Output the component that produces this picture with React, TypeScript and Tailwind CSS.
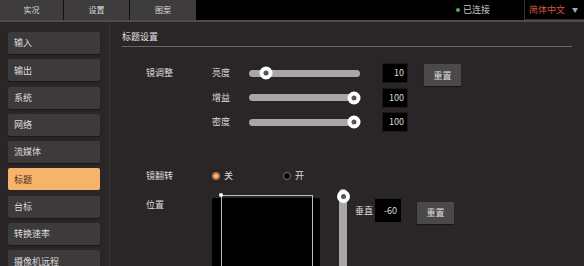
import { useState } from "react"

const font = { fontFamily: '"Noto Sans CJK SC", "Noto Sans", sans-serif' }

const menu = ["输入", "输出", "系统", "网络", "流媒体", "标题", "台标", "转换速率", "摄像机远程"]

function Slider({ pos }: { pos: number }) {
    return (
        <div className="relative w-[111px] h-[7px] rounded-full bg-[#a9a6a8]">
            <div
                className="absolute top-1/2 -translate-y-1/2 -translate-x-1/2 w-[13px] h-[13px] rounded-full bg-white flex items-center justify-center"
                style={{ left: `${pos}%` }}
            >
                <div className="w-[5px] h-[5px] rounded-full bg-[#555]" />
            </div>
        </div>
    )
}

function NumBox({ value }: { value: string }) {
    return (
        <div className="w-[26px] h-[20px] bg-black border border-[#1a1a1a] text-[9px] text-[#ddd] flex items-center justify-end pr-[3px]">
            {value}
        </div>
    )
}

function ResetButton() {
    return (
        <button className="w-[37px] h-[22px] bg-[#4a4849] text-[9px] text-[#ddd] rounded-[1px] shadow-[0_1px_1px_rgba(0,0,0,0.5)]">
            重置
        </button>
    )
}

export default function App() {
    const [active] = useState("标题")
    const adjust = [
        { label: "亮度", pos: 15, value: "10" },
        { label: "增益", pos: 95, value: "100" },
        { label: "密度", pos: 95, value: "100" },
    ]

    return (
        <div className="w-[584px] h-[266px] overflow-hidden bg-[#2a2628] flex flex-col" style={font}>
            {/* top bar */}
            <div className="h-[20px] bg-black flex items-stretch shrink-0">
                <div className="w-[64px] bg-[#3e3c3d] border-r border-[#111] text-[8px] text-[#ddd] flex items-center justify-center">实况</div>
                <div className="w-[66px] bg-[#3e3c3d] border-r border-[#111] text-[8px] text-[#ddd] flex items-center justify-center">设置</div>
                <div className="w-[66px] bg-[#3e3c3d] text-[8px] text-[#ddd] flex items-center justify-center">图案</div>
                <div className="flex-1" />
                <div className="flex items-center gap-[3px] mr-[34px] text-[9px] text-[#ccc]">
                    <div className="w-[4px] h-[4px] rounded-full bg-[#4caf50]" />
                    已连接
                </div>
                <div className="w-[60px] border-l border-b border-[#3a3030] flex items-center justify-between pl-[4px] pr-[6px]">
                    <span className="text-[9px] text-[#d2553d]">简体中文</span>
                    <span className="text-[6px] text-[#aaa]">▼</span>
                </div>
            </div>
            <div className="h-[2px] bg-[#4d4b4c] shrink-0" />

            <div className="flex flex-1 min-h-0">
                {/* sidebar */}
                <div className="w-[110px] shrink-0 border-r border-[#3a3638] pt-[10px] pl-[8px] flex flex-col gap-[5.3px]">
                    {menu.map(item => (
                        <div
                            key={item}
                            className={`w-[92px] h-[22px] shrink-0 rounded-[2px] flex items-center pl-[6px] text-[9px] ${
                                item === active
                                    ? "bg-[#f6b36c] text-[#4a2e16]"
                                    : "bg-[#3d3a3c] text-[#ddd] shadow-[0_1px_1px_rgba(0,0,0,0.4)]"
                            }`}
                        >
                            {item}
                        </div>
                    ))}
                </div>

                {/* content */}
                <div className="flex-1 flex flex-col pl-[12px] pr-[12px]">
                    <div className="pt-[9px] pb-[3px] border-b border-[#666] text-[9px] text-[#e5e5e5] leading-[12px]">
                        标题设置
                    </div>

                    <div className="flex pl-[24px] mt-[16px]">
                        <div className="w-[66px] text-[9px] text-[#ddd] h-[20px] flex items-center">镜调整</div>
                        <div className="flex flex-col gap-[4.5px]">
                            {adjust.map((a, i) => (
                                <div key={a.label} className="flex items-center h-[20px]">
                                    <div className="w-[37px] text-[9px] text-[#ddd]">{a.label}</div>
                                    <Slider pos={a.pos} />
                                    <div className="ml-[22px]">
                                        <NumBox value={a.value} />
                                    </div>
                                    {i === 0 && (
                                        <div className="ml-[16px]">
                                            <ResetButton />
                                        </div>
                                    )}
                                </div>
                            ))}
                        </div>
                    </div>

                    <div className="flex items-center pl-[24px] mt-[38px] h-[12px]">
                        <div className="w-[66px] text-[9px] text-[#ddd]">镜翻转</div>
                        <div className="flex items-center gap-[4px] w-[71px]">
                            <div className="w-[8px] h-[8px] rounded-full border-[2px] border-[#c8703a] bg-[#f0c8a0]" />
                            <span className="text-[9px] text-[#ddd]">关</span>
                        </div>
                        <div className="flex items-center gap-[4px]">
                            <div className="w-[8px] h-[8px] rounded-full border border-[#777] bg-black" />
                            <span className="text-[9px] text-[#ddd]">开</span>
                        </div>
                    </div>

                    <div className="flex pl-[24px] mt-[7px]">
                        <div className="w-[66px] text-[9px] text-[#ddd] pt-[9px]">位置</div>
                        <div className="relative w-[108px] h-[70px] mt-[9px] bg-black rounded-[2px]">
                            <div className="absolute left-[9px] top-[-3px] w-[92px] h-[80px] border border-[#bdbdbd]" />
                            <div className="absolute left-[7px] top-[-5px] w-[4px] h-[4px] rounded-full bg-white" />
                        </div>
                        <div className="relative ml-[18px] w-[10px] h-[80px] flex justify-center">
                            <div className="w-[8px] h-full bg-[#a9a6a8] rounded-t-full" />
                            <div className="absolute top-[1px] w-[13px] h-[13px] rounded-full bg-white flex items-center justify-center">
                                <div className="w-[5px] h-[5px] rounded-full bg-[#555]" />
                            </div>
                        </div>
                        <div className="flex items-center h-[23px] mt-[10px] ml-[7px]">
                            <div className="w-[20px] text-[9px] text-[#ddd]">垂直</div>
                            <div className="w-[26px] h-[23px] bg-black text-[9px] text-[#ddd] flex items-center justify-end pr-[4px]">-60</div>
                            <div className="ml-[16px]">
                                <ResetButton />
                            </div>
                        </div>
                    </div>
                </div>
            </div>
        </div>
    )
}
